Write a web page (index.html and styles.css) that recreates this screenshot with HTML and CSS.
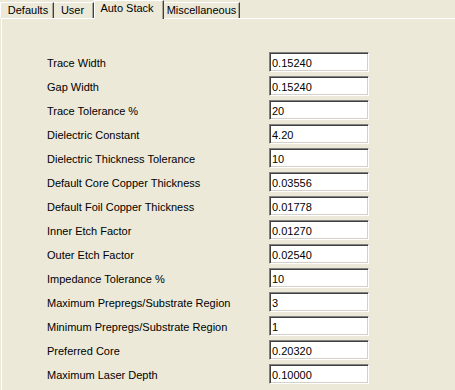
FILE: index.html
```html
<!DOCTYPE html>
<html>
<head>
<meta charset="utf-8">
<link rel="stylesheet" href="styles.css">
</head>
<body>
<div class="window">
  <div class="tabs">
    <div class="tab tab-defaults">Defaults</div>
    <div class="tab tab-user">User</div>
    <div class="tab tab-selected">Auto Stack</div>
    <div class="tab tab-misc">Miscellaneous</div>
  </div>
  <div class="panel">
    <div class="form">
      <label class="label">Trace Width</label><input class="field" value="0.15240">
      <label class="label">Gap Width</label><input class="field" value="0.15240">
      <label class="label">Trace Tolerance %</label><input class="field" value="20">
      <label class="label">Dielectric Constant</label><input class="field" value="4.20">
      <label class="label">Dielectric Thickness Tolerance</label><input class="field" value="10">
      <label class="label">Default Core Copper Thickness</label><input class="field" value="0.03556">
      <label class="label">Default Foil Copper Thickness</label><input class="field" value="0.01778">
      <label class="label">Inner Etch Factor</label><input class="field" value="0.01270">
      <label class="label">Outer Etch Factor</label><input class="field" value="0.02540">
      <label class="label">Impedance Tolerance %</label><input class="field" value="10">
      <label class="label">Maximum Prepregs/Substrate Region</label><input class="field" value="3">
      <label class="label">Minimum Prepregs/Substrate Region</label><input class="field" value="1">
      <label class="label">Preferred Core</label><input class="field" value="0.20320">
      <label class="label">Maximum Laser Depth</label><input class="field" value="0.10000">
    </div>
  </div>
</div>
</body>
</html>
```

FILE: styles.css
```css
html, body {
  margin: 0;
  padding: 0;
  background: #ECE9D8;
}
body {
  width: 455px;
  height: 390px;
  overflow: hidden;
  font-family: "Liberation Sans", Arial, sans-serif;
  font-size: 11px;
  color: #000;
}
.window {
  width: 455px;
  height: 390px;
  display: flex;
  flex-direction: column;
}
.tabs {
  display: flex;
  align-items: flex-end;
  height: 18px;
  position: relative;
  z-index: 1;
}
.tab {
  box-sizing: border-box;
  height: 16px;
  border-top: 1px solid #fff;
  border-left: 1px solid #fff;
  border-right: 1px solid #404040;
  box-shadow: inset -1px 0 #ACA899;
  text-align: center;
  line-height: 15px;
  white-space: nowrap;
}
.tab-defaults { width: 54px; padding-left: 2px; }
.tab-user { width: 40px; border-left: none; padding-right: 2px; }
.tab-selected {
  width: 70px;
  height: 19px;
  margin-bottom: -1px;
  background: #ECE9D8;
  line-height: 14px;
  padding-right: 4px;
}
.tab-misc { width: 76px; border-left: none; }
.panel {
  flex: 1;
  margin-left: 1px;
  border-top: 1px solid #fff;
  border-left: 1px solid #fff;
}
.form {
  display: grid;
  grid-template-columns: 222px 100px;
  grid-auto-rows: 20px;
  row-gap: 4px;
  padding: 33px 0 0 45px;
}
.label {
  padding-top: 5px;
  line-height: 13px;
  white-space: nowrap;
}
.field {
  box-sizing: border-box;
  width: 100px;
  height: 20px;
  margin: 0;
  padding: 1px 1px 0 2px;
  font-family: "Liberation Sans", Arial, sans-serif;
  font-size: 11px;
  line-height: 14px;
  color: #000;
  background: #fff;
  border: 1px solid;
  border-color: #808080 #fff #fff #808080;
  box-shadow: inset 1px 1px #404040, inset -1px -1px #D4D0C8;
  outline: none;
  appearance: none;
  border-radius: 0;
}
```
